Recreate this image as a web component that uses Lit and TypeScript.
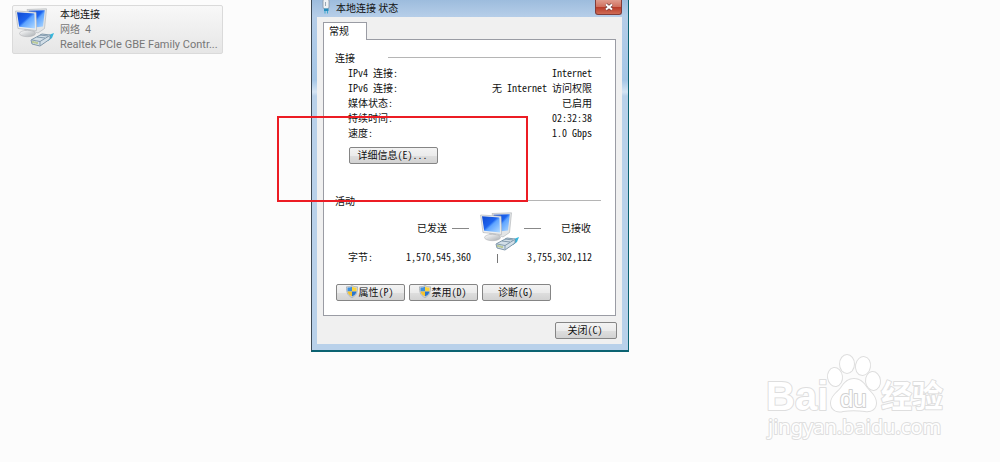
import { LitElement, html, css, svg } from "lit";
import { customElement } from "lit/decorators.js";

const networkIcon = html`<svg class="network" viewBox="0 0 40 40" aria-hidden="true">
  <defs>
    <linearGradient id="screen" x1="0" y1="0" x2="1" y2="1">
      <stop offset="0" stop-color="#1048cf" />
      <stop offset=".45" stop-color="#1c63ee" />
      <stop offset=".55" stop-color="#5ea4ff" />
      <stop offset="1" stop-color="#b5dcff" />
    </linearGradient>
    <linearGradient id="stand" x1="0" y1="0" x2="1" y2="1">
      <stop offset="0" stop-color="#fff" />
      <stop offset="1" stop-color="#a9adb1" />
    </linearGradient>
  </defs>
  <path d="M12 1.500 31.500 .8 29.500 20.500 23 25 18 23Z" fill="#e3e5e6" stroke="#b4b8bb" stroke-width=".7" />
  <path d="M13.500 2.800 29.800 2.200 28 18.500 15 20Z" fill="url(#screen)" />
  <path d="M9 20 16 21 17 25 10 25Z" fill="#c6c9cc" />
  <ellipse cx="12.500" cy="25.500" rx="8" ry="3.200" fill="url(#stand)" stroke="#b3b6b8" stroke-width=".6" />
  <path d="M.6 3 21 4.200 21.500 22.500 3 20.500Z" fill="#eceeef" stroke="#b4b8bb" stroke-width=".7" />
  <path d="M2 4.300 19.500 5.500 20 20.600 4.200 18.700Z" fill="url(#screen)" />
  <path d="M31 28 39 25 37 30 33 33Z" fill="#36b6dc" />
  <path d="M16 32 27 26 35 27 35 31 25 38 17 36Z" fill="#d3dfe8" stroke="#748da2" stroke-width=".9" />
  <path d="M17 32 25 33.500 34 28M25 33.500V37M22 29 30 30M25 27 33 28" fill="none" stroke="#6f899e" stroke-width=".8" />
  <path d="M18 33v2M20 33.500v2M22 34v2" stroke="#a5b74f" stroke-width="1" />
</svg>`;

const shieldIcon = html`<svg class="shield" viewBox="0 0 12 13" aria-hidden="true">
  <path d="M6 .4C7.500 1.500 9.500 1.900 11.500 1.800 11.700 7 10.500 10.500 6 12.600 1.500 10.500.3 7 .5 1.800 2.500 1.900 4.500 1.500 6 .4Z" fill="#d7dde2" stroke="#919aa3" stroke-width=".6" />
  <path d="M6 1.500V6.500H1.500V2.700C3.300 2.700 4.800 2.300 6 1.500Z" fill="#3d8fdd" />
  <path d="M6 1.500V6.500H10.500V2.700C8.700 2.700 7.200 2.300 6 1.500Z" fill="#fbd33b" />
  <path d="M1.500 6.500H6V11.600C3.300 10.300 1.900 8.700 1.500 6.500Z" fill="#f5c22d" />
  <path d="M10.500 6.500H6V11.600C8.700 10.300 10.100 8.700 10.500 6.500Z" fill="#2a75cd" />
</svg>`;

const toes = [
  [77, 29, 7, 9, -8],
  [89, 16, 7, 9, 0],
  [105, 18, 7, 9, 10],
  [115, 33, 7, 9, -6],
].map(
  ([x, y, rx, ry, r]) =>
    svg`<ellipse cx=${x} cy=${y} rx=${rx} ry=${ry} transform="rotate(${r} ${x} ${y})" />`
);

const details = [
  ["IPv4 连接:", "Internet"],
  ["IPv6 连接:", "无 Internet 访问权限"],
  ["媒体状态:", "已启用"],
  ["持续时间:", "02:32:38"],
  ["速度:", "1.0 Gbps"],
];

@customElement("app-root")
export class AppRoot extends LitElement {
  static styles = css`
    :host {
      display: block;
      position: relative;
      min-height: 100vh;
      overflow: hidden;
      box-sizing: border-box;
      padding: 5px 12px;
      background: #fcfcfc;
      color: #111;
      font: 10px/15px "Noto Sans Mono CJK SC", "Liberation Mono", "Noto Sans CJK SC", monospace;
    }
    * {
      box-sizing: border-box;
    }
    .network {
      display: block;
      flex: none;
      width: 40px;
      height: 40px;
    }
    .connection {
      display: flex;
      gap: 5px;
      width: 211px;
      padding: 1px 2px;
      border: 1px solid #dadada;
      border-radius: 2px;
      background: linear-gradient(#f8f8f8, #e6e6e6);
      font-family: "Noto Sans", "Noto Sans CJK SC", sans-serif;
      color: #777;
    }
    .connection .network {
      margin-top: 1px;
    }
    .summary p {
      margin: 0;
      white-space: pre;
    }
    .summary .name {
      color: #111;
    }
    .summary .adapter {
      font-family: Roboto, sans-serif;
      font-size: 11px;
    }
    .dialog {
      position: absolute;
      left: 311px;
      top: 0;
      width: 318px;
      padding: 0 6px 6px 5px;
      border: solid #0b6372;
      border-width: 0 1px 2px 1px;
      border-left-color: #3f4b57;
      background: linear-gradient(#9dbcdd, #b5cde8 16px, #a5c6e6 80px, #d5e4f4 92px, #b9d1ea 96px);
    }
    .titlebar {
      display: flex;
      align-items: flex-start;
      gap: 5px;
      height: 17px;
      padding-left: 4px;
      font-family: "Noto Sans CJK SC", sans-serif;
    }
    .titlebar h1 {
      flex: 1;
      margin: 0;
      font: inherit;
    }
    .plug {
      width: 10px;
      height: 14px;
    }
    .close {
      display: flex;
      align-items: center;
      justify-content: center;
      width: 27px;
      height: 15px;
      padding: 0;
      border: 1px solid #813c38;
      border-top: 0;
      border-radius: 0 0 3px 3px;
      background: linear-gradient(#e09c8d, #cf6f5d 50%, #b83b28 52%, #cf6b55);
    }
    .close svg {
      width: 10px;
      height: 8px;
    }
    .body {
      padding: 5px 6px;
      background: #f0f0f0;
    }
    .tab {
      position: relative;
      display: block;
      width: 44px;
      height: 18px;
      margin-bottom: -1px;
      padding: 0 0 2px 5px;
      border: 1px solid #9a9ca4;
      border-bottom: 0;
      background: #fff;
      color: inherit;
      font: inherit;
      text-align: left;
    }
    .panel {
      height: 277px;
      padding: 10px 14px 14px 11px;
      border: 1px solid #9a9ca4;
      background: #fff;
      display: flex;
      flex-direction: column;
    }
    h2 {
      display: flex;
      align-items: center;
      margin: 0;
      font: inherit;
    }
    h2 span {
      width: 53px;
    }
    h2::after {
      content: "";
      flex: 1;
      height: 1px;
      background: #b5b5b5;
    }
    .details {
      margin: 0;
      padding: 0 9px 0 13px;
    }
    .row {
      display: flex;
      justify-content: space-between;
    }
    .row dd {
      margin: 0;
    }
    .button {
      display: flex;
      align-items: center;
      justify-content: center;
      gap: 1px;
      width: 69px;
      height: 17px;
      padding: 0 2px 2px 0;
      border: 1px solid #858585;
      border-radius: 2px;
      background: linear-gradient(#f3f3f3, #ebebeb 50%, #dedede 52%, #d2d2d2);
      color: #111;
      font: inherit;
      white-space: nowrap;
    }
    .button.more {
      flex: none;
      width: 89px;
      margin: 7px 0 0 14px;
    }
    .button.done {
      width: 62px;
      margin: 6px -1px 0 auto;
    }
    .shield {
      width: 12px;
      height: 13px;
    }
    .activity {
      margin-top: 29px;
    }
    .flow {
      display: flex;
      align-items: flex-start;
      justify-content: flex-end;
      margin-top: 4px;
      padding-right: 10px;
    }
    .label {
      margin-top: 8px;
    }
    .dash {
      width: 17px;
      height: 1px;
      background: #888;
    }
    .dash.out {
      margin: 16px 11px 0 5px;
    }
    .dash.in {
      margin: 16px 20px 0 4px;
    }
    .bytes {
      display: grid;
      grid-template-columns: 58px 66px 1fr auto;
      align-items: center;
      margin-top: -3px;
      padding: 0 9px 0 13px;
    }
    .bytes i {
      justify-self: center;
      width: 1px;
      height: 9px;
      margin: 4px 5px 0 0;
      background: #777;
    }
    .actions {
      display: flex;
      gap: 4px;
      margin: auto 0 0 1px;
    }
    .highlight {
      position: absolute;
      left: 277px;
      top: 116px;
      width: 251px;
      height: 86px;
      border: 2px solid #ec1c24;
      pointer-events: none;
    }
    .watermark {
      position: absolute;
      left: 758px;
      top: 348px;
      width: 200px;
      height: 100px;
      fill: #fff;
      stroke: #dedede;
      stroke-width: 2;
      paint-order: stroke;
      stroke-linejoin: round;
      font-family: "Liberation Sans", "Noto Sans CJK SC", sans-serif;
    }
    .brand {
      font-size: 40px;
      font-weight: 700;
    }
    .du {
      font-size: 24px;
      stroke: #d0d0d0;
    }
    .topic {
      font-size: 31px;
      font-weight: 700;
    }
    .site {
      font-family: "Noto Sans", sans-serif;
      font-size: 20px;
    }
  `;

  render() {
    return html`
      <section class="connection">
        ${networkIcon}
        <div class="summary">
          <p class="name">本地连接</p>
          <p>网络  4</p>
          <p class="adapter">Realtek PCIe GBE Family Contr...</p>
        </div>
      </section>

      <section class="dialog" role="dialog" aria-labelledby="title">
        <header class="titlebar">
          <svg class="plug" viewBox="0 0 10 14" aria-hidden="true">
            <rect x="2" y="-1" width="6" height="10" rx="2" fill="#eef2f5" stroke="#8996a2" stroke-width=".8" />
            <path d="M4.500 2v4" stroke="#9aa8b4" />
            <path d="M3 8.500h4.500v2.500H3z" fill="#278dbd" />
            <path d="M4 11v2.500M6.500 11v2.500" stroke="#3fa9cf" />
          </svg>
          <h1 id="title">本地连接 状态</h1>
          <button class="close" aria-label="关闭">
            <svg viewBox="0 0 10 8" aria-hidden="true">
              <path d="M2 1.500 8 6.500M8 1.500 2 6.500" stroke="#6b3c3c" stroke-width="3.400" />
              <path d="M2 1.500 8 6.500M8 1.500 2 6.500" stroke="#fff" stroke-width="2" />
            </svg>
          </button>
        </header>
        <div class="body">
          <button class="tab" role="tab" aria-selected="true">常规</button>
          <div class="panel" role="tabpanel">
            <h2><span>连接</span></h2>
            <dl class="details">
              ${details.map(
                ([label, value]) => html`<div class="row"><dt>${label}</dt><dd>${value}</dd></div>`
              )}
            </dl>
            <button class="button more">详细信息(E)...</button>
            <h2 class="activity"><span>活动</span></h2>
            <div class="flow">
              <span class="label">已发送</span><span class="dash out"></span>
              ${networkIcon}
              <span class="dash in"></span><span class="label">已接收</span>
            </div>
            <div class="bytes">
              <span>字节:</span><span>1,570,545,360</span><i></i><span>3,755,302,112</span>
            </div>
            <div class="actions">
              <button class="button">${shieldIcon}属性(P)</button>
              <button class="button">${shieldIcon}禁用(D)</button>
              <button class="button">诊断(G)</button>
            </div>
          </div>
          <button class="button done">关闭(C)</button>
        </div>
      </section>

      <div class="highlight"></div>

      <svg class="watermark" viewBox="0 0 200 100">
        <text class="brand" x="8" y="62">Bai</text>
        ${toes}
        <path d="M96 31C102 31 106 35 109 40 113 45 118 48 118 55 118 61 113 64 107 63 99 62 92 62 85 63 78 65 73 61 73 55 73 48 79 45 83 40 86 35 90 31 96 31Z" />
        <text class="du" x="82" y="59">du</text>
        <text class="topic" x="123" y="59">经验</text>
        <text class="site" x="10" y="86">jingyan.baidu.com</text>
      </svg>
    `;
  }
}
